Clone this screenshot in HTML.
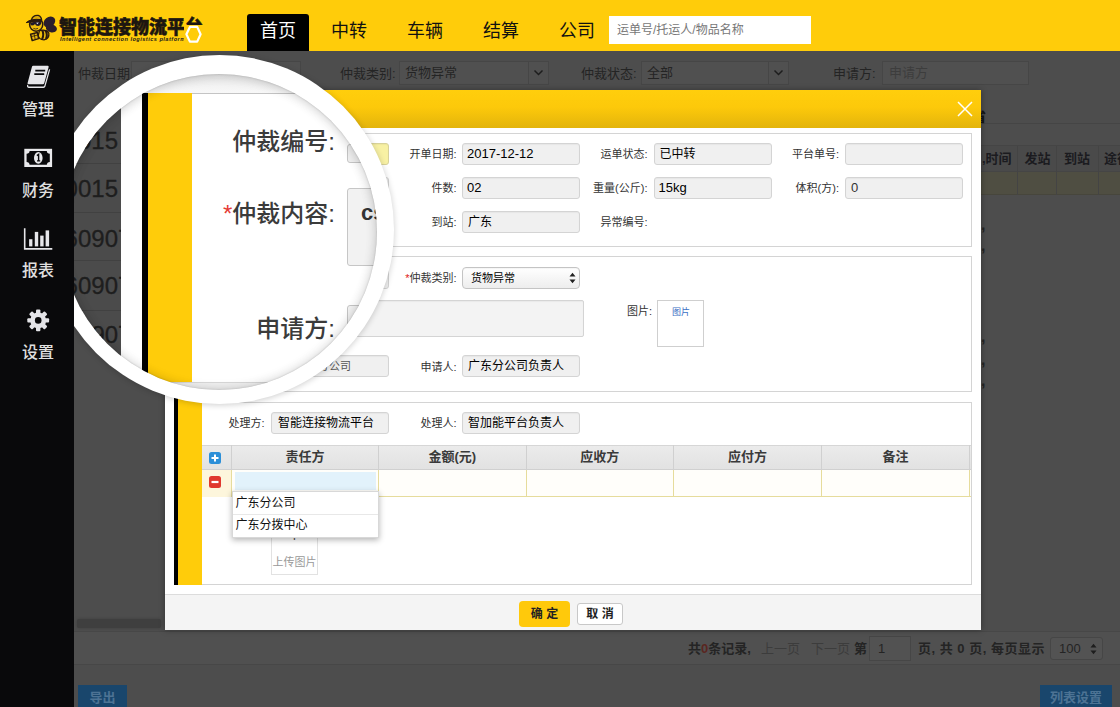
<!DOCTYPE html>
<html lang="zh-CN">
<head>
<meta charset="utf-8">
<title>智能连接物流平台</title>
<style>
*{box-sizing:border-box;margin:0;padding:0}
html,body{width:1120px;height:707px;overflow:hidden}
body{position:relative;background:#4d4d4d;font-family:"Liberation Sans","Noto Sans CJK SC",sans-serif;font-size:12px;color:#333}
.abs{position:absolute}
/* ---------- top bar ---------- */
#top{position:absolute;left:0;top:0;width:1120px;height:51px;background:#ffcc0a}
#top .tab{position:absolute;top:14px;width:62px;height:37px;line-height:35px;text-align:center;font-size:18px;color:#111}
#top .tab.on{background:#000;color:#fff;border-radius:3px 3px 0 0}
#search{position:absolute;left:609px;top:16px;width:202px;height:28px;background:#fff;color:#777;font-size:12px;line-height:28px;padding-left:8px}
#logo-cn{position:absolute;left:59px;top:13px;font-size:18px;transform:scaleY(1.08);transform-origin:0 0;font-weight:900;color:#1c1610;-webkit-text-stroke:.5px #1c1610;letter-spacing:0;white-space:nowrap;line-height:26px}
#logo-en{position:absolute;left:60px;top:35px;font-size:5.6px;font-weight:bold;font-style:italic;color:#1c1a17;white-space:nowrap;line-height:8px;letter-spacing:.48px}
/* ---------- sidebar ---------- */
#side{position:absolute;left:0;top:51px;width:74px;height:656px;background:#09090b;z-index:30}
#side .lbl{position:absolute;left:0;width:76px;text-align:center;font-size:16px;font-weight:500;color:#e0e0e0;line-height:20px}
#side svg{position:absolute}
/* ---------- dimmed page ---------- */
#page{position:absolute;left:74px;top:51px;width:1046px;height:656px;background:#4d4d4d;overflow:hidden}
#page .t{position:absolute;color:#242424;font-size:13px;line-height:16px;white-space:nowrap}
#page .box{position:absolute;border:1px solid #464646;background:#505050}
/* ---------- modal ---------- */
#modal{position:absolute;left:165px;top:90px;width:816px;height:540px;background:#fff;z-index:10;box-shadow:0 0 6px rgba(0,0,0,.35)}
#mhead{position:absolute;left:0;top:0;width:816px;height:38px;background:linear-gradient(#ffce0c 0%,#fdc90a 45%,#e3b40c 100%)}
#mfoot{position:absolute;left:0;top:504px;width:816px;height:36px;background:#f4f4f4;border-top:1px solid #dcdcdc}
.fs{position:absolute;border:1px solid #d4d4d4;background:#fff}
.l{position:absolute;font-size:11px;color:#333;line-height:14px;white-space:nowrap;text-align:right}
.in{position:absolute;height:22px;border:1px solid #d4d4d4;border-radius:3px;background:#f0f0f0;font-size:12px;line-height:20px;color:#000;padding-left:5px;white-space:nowrap;overflow:hidden;box-shadow:inset 0 1px 1px rgba(0,0,0,.04)}
.th{position:absolute;top:0;height:25px;line-height:24px;text-align:center;font-weight:bold;font-size:13px;color:#3a3a3a;border-right:1px solid #d0d0d0}
.td{position:absolute;top:25px;height:27px;border-right:1px solid #e6dc9c}

/* ---------- magnifier ---------- */
#lens{position:absolute;left:44.5px;top:55px;width:349px;height:349px;border-radius:50%;background:#fff;z-index:20;box-shadow:0 1px 6px rgba(0,0,0,.2)}
#lens-in{position:absolute;left:16.5px;top:18.5px;width:316px;height:316px;border-radius:50%;overflow:hidden;background:#fff}
#lens-sh{position:absolute;left:16.5px;top:18.5px;width:316px;height:316px;border-radius:50%;box-shadow:inset 0 2px 12px rgba(0,0,0,.10),inset 0 0 12px rgba(0,0,0,.12),inset 0 0 2px rgba(0,0,0,.2);pointer-events:none}
#lc{position:absolute;left:-61px;top:-73.5px;width:500px;height:500px}
#lc .d{position:absolute;font-size:24px;line-height:28px;color:#1e1e1e;-webkit-text-stroke:.3px #1e1e1e;white-space:nowrap}
#lc .ml{position:absolute;right:165px;font-size:24px;line-height:30px;color:#3b3b3b;font-weight:500;white-space:nowrap;text-align:right}
</style>
</head>
<body>

<!-- ================= dimmed page ================= -->
<div id="page">
  <!-- filter row (coords relative to #page: x-74, y-51) -->
  <div class="t" style="left:4px;top:15px">仲裁日期:</div>
  <div class="box" style="left:57px;top:10px;width:170px;height:24px"><svg class="abs" style="right:6px;top:8px" width="11" height="8" viewBox="0 0 11 8"><path d="M1.5 1.5 L5.5 5.5 L9.5 1.5" fill="none" stroke="#242424" stroke-width="1.5"/></svg></div>
  <div class="t" style="left:266px;top:15px">仲裁类别:</div>
  <div class="box" style="left:325px;top:10px;width:150px;height:24px"><span class="t" style="left:5px;top:3px">货物异常</span><span class="box" style="right:-1px;top:-1px;width:21px;height:24px"></span>
    <svg class="abs" style="right:4px;top:7px" width="11" height="8" viewBox="0 0 11 8"><path d="M1.5 1.5 L5.5 5.5 L9.5 1.5" fill="none" stroke="#1d1d1d" stroke-width="1.5"/></svg></div>
  <div class="t" style="left:507px;top:15px">仲裁状态:</div>
  <div class="box" style="left:567px;top:10px;width:148px;height:24px"><span class="t" style="left:5px;top:3px">全部</span><span class="box" style="right:-1px;top:-1px;width:21px;height:24px"></span>
    <svg class="abs" style="right:4px;top:7px" width="11" height="8" viewBox="0 0 11 8"><path d="M1.5 1.5 L5.5 5.5 L9.5 1.5" fill="none" stroke="#1d1d1d" stroke-width="1.5"/></svg></div>
  <div class="t" style="left:759px;top:15px">申请方:</div>
  <div class="box" style="left:808px;top:10px;width:147px;height:24px"><span class="t" style="left:6px;top:3px;color:#3d3d3d">申请方</span></div>

  <!-- tab line + table -->
  <div class="abs" style="left:908px;top:72px;width:138px;height:1px;background:#454545"></div>
  <div class="t" style="left:905px;top:58px;font-size:13px;font-weight:900;color:#151515;width:7px;overflow:hidden;direction:rtl">省</div>
  <div class="abs" style="left:0;top:94px;width:1046px;height:27px;background:#4a4a4a;border-top:1px solid #454545;border-bottom:1px solid #454545"></div>
  <div class="abs" style="left:0;top:121px;width:1046px;height:23px;background:#4f4e42;border-bottom:1px solid #47463c"></div>
  <div class="t" style="left:908px;top:100px;font-weight:bold;color:#1b1b1f">,时间</div>
  <div class="t" style="left:950.5px;top:100px;font-weight:bold;color:#1b1b1f">发站</div>
  <div class="t" style="left:990px;top:100px;font-weight:bold;color:#1b1b1f">到站</div>
  <div class="t" style="left:1030px;top:100px;font-weight:bold;color:#1b1b1f">途径</div>
  <div class="abs" style="left:943px;top:95px;width:1px;height:49px;background:#444"></div>
  <div class="abs" style="left:982px;top:95px;width:1px;height:49px;background:#444"></div>
  <div class="abs" style="left:1023.5px;top:95px;width:1px;height:49px;background:#444"></div>
  <div class="t" style="left:907px;top:166px;font-weight:bold;font-size:16px">,</div>
  <div class="t" style="left:907px;top:187px;font-weight:bold;font-size:16px">,</div>
  <div class="t" style="left:907px;top:278px;font-weight:bold;font-size:16px">,</div>
  <div class="t" style="left:907px;top:301px;font-weight:bold;font-size:16px">,</div>
  <div class="t" style="left:907px;top:322px;font-weight:bold;font-size:16px">,</div>

  <!-- scrollbar + pager -->
  <div class="abs" style="left:3px;top:568px;width:84px;height:9px;background:#3f3f3f;border-radius:2px;box-shadow:0 0 3px #3f3f3f"></div>
  <div class="abs" style="left:0;top:580px;width:1046px;height:34px;background:#505050;border-top:1px solid #474747;border-bottom:1px solid #474747"></div>
  <div class="t" style="left:614px;top:590px;font-weight:bold">共<span style="color:#5a2620">0</span>条记录,</div>
  <div class="t" style="left:687px;top:590px;color:#3c3c3c">上一页</div>
  <div class="t" style="left:737px;top:590px;color:#3c3c3c">下一页</div>
  <div class="t" style="left:780px;top:590px;font-weight:bold">第</div>
  <div class="box" style="left:795px;top:585px;width:42px;height:25px;background:#525252"><span class="t" style="left:8px;top:4px">1</span></div>
  <div class="t" style="left:844px;top:590px;font-weight:bold;letter-spacing:.5px">页, 共 0 页, 每页显示</div>
  <div class="box" style="left:976px;top:586px;width:53px;height:23px;background:#535353;border-radius:3px"><span class="t" style="left:8px;top:3px">100</span>
    <svg class="abs" style="right:5px;top:5px" width="7" height="12" viewBox="0 0 7 12"><path d="M0.5 4.5L3.5 0.8L6.5 4.5Z M0.5 7.5L3.5 11.2L6.5 7.5Z" fill="#1d1d1d"/></svg></div>

  <!-- buttons -->
  <div class="abs" style="left:4px;top:634px;width:49px;height:26px;background:#19466c;color:#4d7394;font-size:13px;font-weight:bold;text-align:center;line-height:26px">导出</div>
  <div class="abs" style="left:966px;top:634px;width:72px;height:26px;background:#19466c;color:#4d7394;font-size:13px;font-weight:bold;text-align:center;line-height:26px">列表设置</div>
</div>


<!-- ================= magnifier ================= -->
<div id="lens">
  <div id="lens-in"><div id="lc">
    <div class="abs" style="left:121px;top:72px;width:300px;height:21px;background:linear-gradient(#e9e9e9,#f8f8f8)"></div>
    <div class="abs" style="left:142px;top:93px;width:260px;height:1px;background:#c4c4c4"></div>
    <div class="abs" style="left:121px;top:382px;width:300px;height:10px;background:#f0f0f0;border-top:1px solid #d8d8d8"></div>
    <!-- dimmed grid on the left -->
    <div class="abs" style="left:60px;top:70px;width:61px;height:320px;background:#4b4b4b;overflow:hidden">
      <div class="abs" style="left:0;top:93px;width:61px;height:1px;background:#414141"></div>
      <div class="abs" style="left:0;top:142px;width:61px;height:1px;background:#414141"></div>
      <div class="abs" style="left:0;top:190px;width:61px;height:1px;background:#414141"></div>
      <div class="abs" style="left:0;top:240px;width:61px;height:1px;background:#414141"></div>
      <div class="d" style="left:18px;top:57px">015</div>
      <div class="d" style="left:4.6px;top:105px">0015</div>
      <div class="d" style="left:4.6px;top:155px">60907</div>
      <div class="d" style="left:4.6px;top:202px">60907</div>
      <div class="d" style="left:31.4px;top:251px">907</div>
    </div>
    <div class="abs" style="left:142px;top:93px;width:6px;height:289px;background:#000"></div>
    <div class="abs" style="left:148px;top:93px;width:44px;height:289px;background:#ffcc0a"></div>
    <div class="ml" style="top:127px">仲裁编号:</div>
    <div class="ml" style="top:199px"><span style="color:#e53a35">*</span>仲裁内容:</div>
    <div class="ml" style="top:314px">申请方:</div>
    <div class="abs" style="left:347px;top:144px;width:80px;height:19px;border:1.5px solid #c6c6c6;border-radius:3px;background:#efefef"></div>
    <div class="abs" style="left:347px;top:188px;width:80px;height:78px;border:1.5px solid #c6c6c6;border-radius:3px;background:#f2f2f2"></div>
    <div class="abs" style="left:361px;top:198px;font-size:22px;line-height:30px;font-weight:bold;color:#333">cs</div>
    <div class="abs" style="left:347px;top:305px;width:80px;height:44px;border:1.5px solid #c6c6c6;border-radius:3px;background:#f2f2f2"></div>
  </div></div>
  <div id="lens-sh"></div>
</div>

<!-- ================= top bar ================= -->
<div id="top">
  <svg class="abs" style="left:22px;top:8px" width="50" height="40" viewBox="22 8 50 40">
    <!-- wings -->
    <ellipse cx="49.4" cy="22" rx="6.4" ry="5" transform="rotate(-40 49.4 22)" fill="#2a1d2c"/>
    <ellipse cx="51.4" cy="28.4" rx="5.6" ry="3.9" transform="rotate(12 51.4 28.4)" fill="#2a1d2c"/>
    <!-- body -->
    <path d="M39.5 30.5 Q46.5 29 48.8 33 Q49.6 38.6 44 39.8 Q38.8 39.6 38.2 35.5Z" fill="#f0c00c" stroke="#2a1a0e" stroke-width="1.3"/>
    <path d="M42.2 30.2 Q44.4 34 42 39.6 M45.4 30.4 Q48 34.4 46 39" stroke="#2a1a0e" stroke-width="2.1" fill="none"/>
    <!-- head -->
    <circle cx="36.2" cy="24.6" r="6.6" fill="#eebd0c" stroke="#2a1a0e" stroke-width="1.5"/>
    <!-- cap -->
    <path d="M31.6 19.4 Q33 14.8 38.2 15.4 Q41.4 16.4 41.6 20.2 L31.6 21Z" fill="#d9a90c" stroke="#2a1a0e" stroke-width="1.4"/>
    <path d="M26.2 22.6 Q31 18.4 40.8 19.6 L40.6 22 Q32.6 21.2 26.2 22.6Z" fill="#2a1a0e" stroke="#2a1a0e" stroke-width="1"/>
    <!-- glasses -->
    <path d="M30.2 22.8 Q35.4 21.2 41.2 22 Q41.4 25.4 38.2 26 Q35.6 25.8 35 24 Q34 25.6 31.6 25.6 Q30 25 30.2 22.8Z" fill="#221a2a"/>
    <path d="M36.2 22.8 L38.8 22.4 L37.4 24.2Z" fill="#e9edf4"/>
    <path d="M33.4 28.4 Q35.6 29.6 38 28.4" stroke="#2a1a0e" stroke-width=".8" fill="none"/>
    <!-- fist -->
    <path d="M30.6 34.2 L37.4 32.6 L38.6 38.6 L32.2 40.6Z" fill="#e8b80c" stroke="#2a1a0e" stroke-width="1.5" stroke-linejoin="round"/>
    <path d="M31.4 36.6 L37.8 35 M34 33.6 L35.2 39.4" stroke="#2a1a0e" stroke-width=".8" fill="none"/>
  </svg>
  <div id="logo-cn">智能连接物流平台</div>
  <div id="logo-en">Intelligent connection logistics platform</div>
  <div class="abs" style="left:184px;top:25px;width:19px;height:19px;background:#ffcc0a"></div>
  <svg class="abs" style="left:183px;top:23px" width="22" height="22" viewBox="183 23 22 22"><path d="M186.4 34.2 L189.9 26.9 H197.2 L200.6 34.2 L197.2 41.6 H189.9Z" fill="none" stroke="#fff" stroke-width="2.2" stroke-linejoin="round"/></svg>
  <div class="tab on" style="left:247px">首页</div>
  <div class="tab" style="left:318px">中转</div>
  <div class="tab" style="left:394px">车辆</div>
  <div class="tab" style="left:470px">结算</div>
  <div class="tab" style="left:546px">公司</div>
  <div id="search">运单号/托运人/物品名称</div>
</div>

<!-- ================= sidebar ================= -->
<div id="side">
  <svg style="left:0;top:0" width="74" height="300" viewBox="0 51 74 300">
    <!-- book -->
    <g fill="#e6e6ea" stroke="none">
      <path d="M33.2 65.8 H47.6 Q49 65.8 48.6 67.2 L44.2 83.2 Q43.9 84.3 42.8 84.3 H28.6 Q27.2 84.3 27.6 82.9 L31.9 66.9 Q32.2 65.8 33.2 65.8Z"/>
      <path d="M27.2 84.6 Q26.4 87.9 28.6 87.9 H43.6 Q45 87.9 45.4 86.6 L50.2 69.6 L49 69.2 L44.4 85.6 Q44.2 86.5 43.2 86.5 H28.8 Q27.9 86.5 28.3 85.2Z"/>
    </g>
    <path d="M35.3 70.6 H45.2 M34.3 74.2 H44.2" stroke="#09090b" stroke-width="1.7" fill="none"/>
    <!-- money -->
    <rect x="24.3" y="148.8" width="27.8" height="18.2" fill="#e9e9ec"/>
    <path d="M29.6 151 H46.8 Q47 153.6 49.8 153.8 V162 Q47 162.2 46.8 164.8 H29.6 Q29.4 162.2 26.6 162 V153.8 Q29.4 153.6 29.6 151Z" fill="#09090b"/>
    <ellipse cx="38.3" cy="157.9" rx="4.3" ry="5.9" fill="#e9e9ec"/>
    <path d="M36.9 155.6 L38.6 154.3 V160.6 M37 160.9 H40.2" stroke="#09090b" stroke-width="1.4" fill="none"/>
    <!-- chart -->
    <path d="M24.7 228.2 V248.9 H52.3" stroke="#e6e6ea" stroke-width="1.6" fill="none"/>
    <g fill="#e6e6ea"><rect x="29.1" y="239.2" width="3.3" height="7.2"/><rect x="34.8" y="231.9" width="3.4" height="14.5"/><rect x="40.2" y="235.6" width="3.4" height="10.8"/><rect x="45.6" y="230.4" width="3.5" height="16"/></g>
    <!-- gear -->
    <g transform="translate(38.2 320.4)" fill="#e4e4e8">
      <circle r="7.9"/>
      <g id="tooth"><rect x="-2.2" y="-10.9" width="4.4" height="5" rx="1"/></g>
      <rect x="-2.2" y="-10.9" width="4.4" height="5" rx="1" transform="rotate(45)"/>
      <rect x="-2.2" y="-10.9" width="4.4" height="5" rx="1" transform="rotate(90)"/>
      <rect x="-2.2" y="-10.9" width="4.4" height="5" rx="1" transform="rotate(135)"/>
      <rect x="-2.2" y="-10.9" width="4.4" height="5" rx="1" transform="rotate(180)"/>
      <rect x="-2.2" y="-10.9" width="4.4" height="5" rx="1" transform="rotate(225)"/>
      <rect x="-2.2" y="-10.9" width="4.4" height="5" rx="1" transform="rotate(270)"/>
      <rect x="-2.2" y="-10.9" width="4.4" height="5" rx="1" transform="rotate(315)"/>
      <circle r="3.3" fill="#09090b"/>
    </g>
  </svg>
  <div class="lbl" style="top:49px">管理</div>
  <div class="lbl" style="top:130px">财务</div>
  <div class="lbl" style="top:210px">报表</div>
  <div class="lbl" style="top:292px">设置</div>
</div>

<!-- ================= modal ================= -->
<div id="modal">
  <div id="mhead"></div>
  <svg class="abs" style="left:791px;top:10px" width="18" height="18" viewBox="0 0 18 18"><path d="M2 2L16 16M16 2L2 16" stroke="#fff" stroke-width="1.5" fill="none"/></svg>
  <div class="fs" style="left:9px;top:43px;width:798px;height:114px"></div>
  <div class="in" style="left:106px;top:53px;width:118px;background:#f8f1a4;border-color:#d8d29a"></div>
  <div class="l" style="right:524.5px;top:57px">开单日期:</div>
  <div class="in" style="left:297px;top:53px;width:118px;font-size:13px;padding-left:4px">2017-12-12</div>
  <div class="l" style="right:333.5px;top:57px">运单状态:</div>
  <div class="in" style="left:488.5px;top:53px;width:118px;">已中转</div>
  <div class="l" style="right:142px;top:57px">平台单号:</div>
  <div class="in" style="left:680px;top:53px;width:118px;"></div>
  <div class="in" style="left:106px;top:87px;width:118px;"></div>
  <div class="l" style="right:524.5px;top:91px">件数:</div>
  <div class="in" style="left:297px;top:87px;width:118px;font-size:13px;padding-left:4px">02</div>
  <div class="l" style="right:333.5px;top:91px">重量(公斤):</div>
  <div class="in" style="left:488.5px;top:87px;width:118px;font-size:13px;padding-left:4px">15kg</div>
  <div class="l" style="right:142px;top:91px">体积(方):</div>
  <div class="in" style="left:680px;top:87px;width:118px;color:#333;font-size:13px">0</div>
  <div class="in" style="left:106px;top:121px;width:118px;"></div>
  <div class="l" style="right:524.5px;top:125px">到站:</div>
  <div class="in" style="left:297px;top:121px;width:118px;">广东</div>
  <div class="l" style="right:333.5px;top:125px">异常编号:</div>
  <div class="fs" style="left:9px;top:166px;width:798px;height:136px"></div>
  <div class="in" style="left:106px;top:177px;width:118px;"></div>
  <div class="l" style="right:524.5px;top:181px"><span style="color:#e02020">*</span>仲裁类别:</div>
  <div class="in" style="left:297px;top:177px;width:118px;font-size:11px;padding-left:8px;background:linear-gradient(#fff,#ededed);border-color:#c4c4c4;border-radius:4px">货物异常</div>
  <svg class="abs" style="left:404px;top:182px" width="7" height="12" viewBox="0 0 7 12"><path d="M0.5 4.6L3.5 0.8L6.5 4.6Z M0.5 7.4L3.5 11.2L6.5 7.4Z" fill="#222"/></svg>
  <div class="in" style="left:106px;top:210px;width:313px;height:37px;border-radius:2px;background:#f3f3f3"></div>
  <div class="l" style="right:329px;top:214px">图片:</div>
  <div class="abs" style="left:492px;top:210px;width:47px;height:47px;border:1px solid #cfcfcf;background:#fff"></div>
  <div class="abs" style="left:507px;top:217px;font-size:9px;line-height:11px;color:#3a6fc4">图片</div>
  <div class="in" style="left:106px;top:265px;width:118px;font-size:11px;color:#555;padding-left:24px">广东分公司</div>
  <div class="l" style="right:524.5px;top:270px">申请人:</div>
  <div class="in" style="left:297px;top:265px;width:118px;font-size:12px">广东分公司负责人</div>
  <div class="fs" style="left:9px;top:312px;width:798px;height:183px"></div>
  <div class="abs" style="left:9px;top:43px;width:4px;height:452px;background:#000"></div>
  <div class="abs" style="left:13px;top:43px;width:24px;height:452px;background:#ffcc0a"></div>
  <div class="l" style="right:716.5px;top:326px">处理方:</div>
  <div class="in" style="left:106px;top:322px;width:118px;font-size:12px;padding-left:6px">智能连接物流平台</div>
  <div class="l" style="right:524.5px;top:326px">处理人:</div>
  <div class="in" style="left:297px;top:322px;width:118px;font-size:12px">智加能平台负责人</div>
  <div class="abs" id="grid" style="left:37px;top:355px;width:769px;height:53px"><div class="abs" style="left:0;top:0;width:769px;height:25px;background:linear-gradient(#ebebeb,#e2e2e2);border-top:1px solid #d6d6d6;border-bottom:1px solid #d0d0d0"></div><div class="abs" style="left:0;top:25px;width:769px;height:27px;background:#fffefa;border-bottom:1px solid #e6dc9c"></div><div class="th" style="left:0;width:30px"></div><div class="td" style="left:0;width:30px;background:#fdf6dc"></div><div class="th" style="left:30px;width:147px">责任方</div><div class="td" style="left:30px;width:147px"></div><div class="th" style="left:177px;width:147.5px">金额(元)</div><div class="td" style="left:177px;width:147.5px"></div><div class="th" style="left:324.5px;width:147.5px">应收方</div><div class="td" style="left:324.5px;width:147.5px"></div><div class="th" style="left:472px;width:148px">应付方</div><div class="td" style="left:472px;width:148px"></div><div class="th" style="left:620px;width:148px">备注</div><div class="td" style="left:620px;width:148px"></div><div class="abs" style="left:33px;top:27px;width:141px;height:18px;background:#e2f2fb"></div><svg class="abs" style="left:7px;top:7px" width="12" height="12" viewBox="0 0 12 12"><rect width="12" height="12" rx="2.5" fill="#2c8fd8"/><path d="M6 2.5V9.5M2.5 6H9.5" stroke="#fff" stroke-width="2"/></svg><svg class="abs" style="left:7px;top:31px" width="12" height="12" viewBox="0 0 12 12"><rect width="12" height="12" rx="2.5" fill="#e0392e"/><path d="M2.5 6H9.5" stroke="#fff" stroke-width="2.2"/></svg></div>
  <div class="abs" style="left:106px;top:440px;width:47px;height:45px;border:1px solid #e2e2e2;background:#fff"></div>
  <div class="abs" style="left:106px;top:436px;width:47px;text-align:center;font-size:16px;color:#555;line-height:20px">+</div>
  <div class="abs" style="left:106px;top:465px;width:47px;text-align:center;font-size:11px;color:#999;line-height:14px">上传图片</div>
  <div class="abs" style="left:66.5px;top:401px;width:147.5px;height:47px;background:#fff;border:1px solid #d8d8d8;box-shadow:0 2px 6px rgba(0,0,0,.3);font-size:12px;color:#111"><div style="height:23px;line-height:22px;padding-left:3px;border-bottom:1px solid #e8e8e8">广东分公司</div><div style="height:22px;line-height:21px;padding-left:3px">广东分拨中心</div></div>
  <div id="mfoot"></div>
  <div class="abs" style="left:354px;top:511px;width:51px;height:26px;background:#ffc90b;border-radius:4px;text-align:center;line-height:26px;font-size:12px;font-weight:bold;color:#222">确 定</div>
  <div class="abs" style="left:412px;top:513px;width:46px;height:22px;background:#fff;border:1px solid #c8c8c8;border-radius:3px;text-align:center;line-height:20px;font-size:12px;font-weight:bold;color:#222">取 消</div>
</div>

</body>
</html>
